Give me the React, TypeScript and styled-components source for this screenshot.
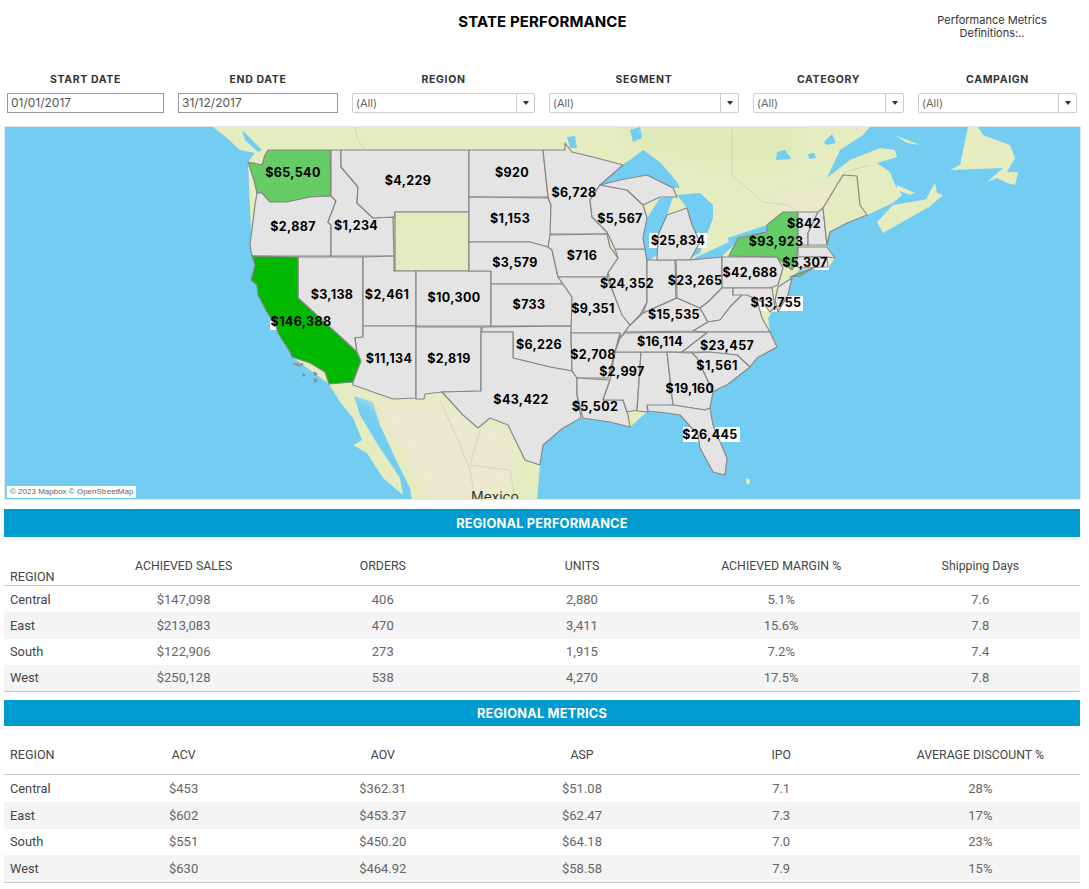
import styled, { createGlobalStyle } from "styled-components";

const GlobalStyle = createGlobalStyle`
  html, body {
    margin: 0;
    padding: 0;
    background: #fff;
    font-family: "Inter", "Liberation Sans", sans-serif;
  }
`;

const Page = styled.div`
  width: 1089px;
  height: 889px;
  overflow: hidden;
`;

const Header = styled.header`
  display: grid;
  grid-template-columns: 190px 1fr 194px;
  height: 72px;
`;

const Title = styled.h1`
  grid-column: 2;
  margin: 13px 0 0;
  font-size: 15px;
  line-height: 17px;
  font-weight: 700;
  letter-spacing: 0.1px;
  text-align: center;
  color: #000;
`;

const Note = styled.div`
  margin-top: 14px;
  font-size: 11px;
  line-height: 13px;
  text-align: center;
  color: #333;
`;

const Filters = styled.div`
  display: flex;
  gap: 14px;
  padding: 0 12px 0 7px;
  height: 54px;
`;

const Filter = styled.div<{ $width: number }>`
  width: ${(p) => p.$width}px;
  display: flex;
  flex-direction: column;
`;

const FilterLabel = styled.div`
  height: 21px;
  font-size: 10.5px;
  line-height: 15px;
  font-weight: 700;
  letter-spacing: 0.65px;
  text-align: center;
  color: #333;
`;

const DateBox = styled.div`
  box-sizing: border-box;
  height: 20px;
  padding-left: 3px;
  border: 1px solid #999;
  font-size: 12px;
  line-height: 18px;
  color: #555;
`;

const SelectBox = styled.div`
  box-sizing: border-box;
  height: 20px;
  display: flex;
  justify-content: space-between;
  border: 1px solid #ccc;
  border-radius: 2px;
  font-size: 11px;
  line-height: 18px;
  color: #666;
`;

const SelectText = styled.span`
  padding-left: 3px;
`;

const SelectArrow = styled.span`
  width: 17px;
  border-left: 1px solid #ccc;
  display: flex;
  align-items: center;
  justify-content: center;

  &::after {
    content: "";
    border-top: 4px solid #333;
    border-left: 3.5px solid transparent;
    border-right: 3.5px solid transparent;
  }
`;

const MapFrame = styled.div`
  position: relative;
  box-sizing: border-box;
  width: 1077px;
  height: 374px;
  margin-left: 4px;
  border: 1px solid #e6e6e6;
  background: #73cdf2;
  overflow: hidden;
`;

const MapSvg = styled.svg`
  display: block;
`;

const Land = styled.polygon`
  fill: #e5ecc0;
  stroke: none;
`;

const Tint = styled.polygon<{ $tone: string }>`
  fill: ${(p) => p.$tone};
  stroke: none;
  filter: blur(5px);
`;

const Water = styled.polygon`
  fill: #73cdf2;
  stroke: none;
`;

const Region = styled.polygon<{ $tone?: "high" | "mid" | "none" }>`
  fill: ${(p) =>
    p.$tone === "high"
      ? "#00b800"
      : p.$tone === "mid"
      ? "#66cc66"
      : p.$tone === "none"
      ? "#e5ebc0"
      : "#e4e4e4"};
  stroke: #868686;
  stroke-width: 1.2;
  stroke-linejoin: round;
`;

const BorderLine = styled.polyline`
  fill: none;
  stroke: #d3d6b8;
  stroke-width: 1;
`;

const Halo = styled.rect`
  fill: #fff;
`;

const Value = styled.text`
  font-family: "Inter", "Liberation Sans", sans-serif;
  font-size: 12.5px;
  font-weight: 700;
  letter-spacing: 0.35px;
  fill: #000;
  text-anchor: middle;
  dominant-baseline: central;
`;

const PlaceName = styled.text`
  font-family: "Inter", "Liberation Sans", sans-serif;
  font-size: 14px;
  fill: #333;
  text-anchor: middle;
`;

const Attribution = styled.div`
  position: absolute;
  left: 2px;
  bottom: 1px;
  height: 12px;
  padding: 0 3px;
  background: #fff;
  font-family: "Liberation Sans", sans-serif;
  font-size: 8px;
  line-height: 12px;
  color: #666;
`;

const Bar = styled.div<{ $top: number; $height: number }>`
  width: 1076px;
  height: ${(p) => p.$height}px;
  margin: ${(p) => p.$top}px 0 0 4px;
  background: #009bd0;
  font-size: 12.8px;
  font-weight: 700;
  line-height: ${(p) => p.$height + 1}px;
  letter-spacing: 0.2px;
  text-align: center;
  color: #fff;
`;

const Table = styled.div`
  width: 1076px;
  margin-left: 4px;
  border-bottom: 1px solid #c8c8c8;
  font-family: "Roboto", "Liberation Sans", sans-serif;
`;

const HeadRow = styled.div`
  display: grid;
  grid-template-columns: 80px repeat(5, 199.2px);
  height: 48px;
  border-bottom: 1px solid #c8c8c8;
`;

const HeadCell = styled.div<{ $first?: boolean; $low?: boolean }>`
  padding-top: ${(p) => (p.$low ? 32 : p.$first ? 21 : 22)}px;
  padding-left: ${(p) => (p.$first ? 6 : 0)}px;
  font-size: ${(p) => (p.$first ? 12.6 : 12.3)}px;
  line-height: 15px;
  text-align: ${(p) => (p.$first ? "left" : "center")};
  color: #444;
`;

const BodyRow = styled.div<{ $alt: boolean; $height: number }>`
  display: grid;
  grid-template-columns: 80px repeat(5, 199.2px);
  height: ${(p) => p.$height}px;
  align-items: center;
  background: ${(p) => (p.$alt ? "#f4f4f4" : "#fff")};
`;

const RegionCell = styled.div`
  padding-left: 6px;
  font-size: 12.8px;
  color: #444;
`;

const ValueCell = styled.div`
  font-size: 13px;
  text-align: center;
  color: #666;
`;

const filters = [
  { label: "START DATE", width: 157, value: "01/01/2017", date: true },
  { label: "END DATE", width: 160, value: "31/12/2017", date: true },
  { label: "REGION", width: 183, value: "(All)" },
  { label: "SEGMENT", width: 190, value: "(All)" },
  { label: "CATEGORY", width: 151, value: "(All)" },
  { label: "CAMPAIGN", width: 159, value: "(All)" },
];

type Tone = "high" | "mid" | "none";

const states: { points: string; tone?: Tone }[] = [
  { points: "268,150 330,150 331,196 310,197 287,202 270,202 262,193 257,193 254,180 248,162 262,165 265,155", tone: "mid" },
  { points: "257,193 262,193 270,202 287,202 310,197 331,196 336,201 328,222 331,225 331,256 252,256 250,245 255,205" },
  { points: "331,150 341,150 341,167 358,187 357,203 373,218 393,217 394,256 331,256 331,225 328,222 336,201 331,196" },
  { points: "341,150 469,150 469,212 395,212 394,218 393,217 373,218 357,203 358,187 341,167" },
  { points: "395,212 469,212 469,271 395,271", tone: "none" },
  { points: "298,257 363,257 363,337 355,338 357,352 298,298" },
  { points: "252,256 298,257 298,298 357,352 361,361 353,382 329,384 325,372 310,363 292,357 290,352 278,333 276,326 267,312 258,295 257,285 251,280 255,265", tone: "high" },
  { points: "363,257 394,256 394,271 416,271 416,326 363,326" },
  { points: "363,326 416,326 416,398 393,399 353,385 353,382 361,361 357,352 355,338 363,337" },
  { points: "416,271 491,271 491,326 416,326" },
  { points: "416,327 481,327 481,391 442,392 425,394 424,399 416,399" },
  { points: "469,150 543,150 548,197 469,197" },
  { points: "469,197 548,198 551,205 551,235 548,247 530,242 469,242" },
  { points: "469,242 530,242 548,247 552,250 558,277 563,284 491,284 491,271 469,271" },
  { points: "491,284 563,284 572,297 572,326 491,326" },
  { points: "482,327 572,326 571,333 572,371 550,367 513,358 513,332 482,332" },
  { points: "481,332 513,332 513,358 550,367 572,371 577,378 577,395 581,418 563,428 543,445 540,465 525,460 508,425 490,418 478,428 463,415 442,392 481,391" },
  { points: "543,150 565,150 565,143 572,152 593,157 623,165 600,185 590,200 592,217 607,232 607,234 550,234 551,205 548,197" },
  { points: "550,235 607,234 610,247 618,258 608,273 607,277 558,277 552,250 548,247" },
  { points: "558,277 607,277 613,292 623,315 630,325 620,338 620,333 571,333 572,297 563,284" },
  { points: "571,333 620,333 615,352 608,378 577,378 572,371" },
  { points: "577,378 610,380 603,400 623,400 628,415 630,427 610,422 583,418 577,395" },
  { points: "615,352 641,352 637,410 627,412 623,400 603,400 610,380" },
  { points: "641,352 667,352 673,405 647,407 648,412 637,411" },
  { points: "625,333 708,332 682,352 615,352 620,338" },
  { points: "630,325 643,313 677,298 700,308 708,322 693,331 625,332" },
  { points: "615,249 645,249 647,262 647,302 640,315 630,325 622,315 613,292 608,273 618,258" },
  { points: "590,200 600,185 627,190 643,205 647,218 643,238 645,249 615,249 607,232 592,217" },
  { points: "647,260 675,260 676,298 643,313 647,302" },
  { points: "657,260 658,235 667,215 687,208 692,225 700,242 690,260" },
  { points: "600,185 620,180 647,175 673,188 677,197 660,197 643,205 627,190" },
  { points: "676,260 690,260 722,257 722,288 708,302 700,308 677,298" },
  { points: "722,257 777,257 783,268 778,285 770,288 722,288" },
  { points: "722,288 733,288 733,295 745,292 730,307 720,320 708,322 700,308 708,302" },
  { points: "720,320 730,307 745,292 757,300 762,318 770,332 708,332 693,331 708,322" },
  { points: "733,288 772,288 775,307 770,312 762,302 747,295 733,295" },
  { points: "778,287 792,278 788,295 778,312 775,300" },
  { points: "783,212 798,212 798,245 795,265 792,270 782,262 777,257 729,256 738,238 767,232 767,225", tone: "mid" },
  { points: "790,277 813,268 800,276", tone: "mid" },
  { points: "798,212 818,212 808,233 808,245 798,245" },
  { points: "818,212 823,208 827,245 808,245 808,233" },
  { points: "798,247 827,247 835,258 827,257 798,257" },
  { points: "798,257 827,257 828,267 800,268 795,265" },
  { points: "708,332 770,332 777,347 757,358 750,367 737,355 707,352 682,352" },
  { points: "692,353 710,352 737,355 750,367 727,385 720,388 713,392 697,358" },
  { points: "667,352 692,353 697,358 713,392 710,408 705,410 673,405" },
  { points: "647,405 673,405 705,410 710,408 713,425 727,458 725,475 713,472 700,448 698,435 680,415 667,413 648,411" },
  { points: "823,208 843,175 857,176 860,205 867,215 847,223 830,232 827,245", tone: "none" },
  { points: "294,364 303,364 300,366" },
  { points: "314,372 317,374 315,375" },
  { points: "303,374 305,375 303,376" },
  { points: "314,379 317,380 315,382" },
];

const labels: [string, number, number][] = [
  ["$65,540", 293, 172], ["$4,229", 408, 180], ["$920", 512, 172], ["$6,728", 574, 192],
  ["$5,567", 620, 218], ["$1,153", 510, 218], ["$25,834", 678, 240], ["$2,887", 293, 226],
  ["$1,234", 356, 225], ["$3,579", 515, 262], ["$716", 582, 255], ["$24,352", 627, 283],
  ["$23,265", 695, 280], ["$93,923", 776, 241], ["$842", 804, 223], ["$5,307", 805, 262],
  ["$42,688", 750, 272], ["$13,755", 776, 302], ["$3,138", 332, 294], ["$2,461", 387, 294],
  ["$10,300", 454, 297], ["$733", 529, 304], ["$9,351", 593, 308], ["$15,535", 674, 314],
  ["$146,388", 301, 321], ["$6,226", 539, 344], ["$16,114", 660, 341], ["$23,457", 727, 345],
  ["$2,708", 593, 354], ["$11,134", 389, 358], ["$2,819", 449, 358], ["$1,561", 717, 365],
  ["$2,997", 622, 371], ["$19,160", 690, 388], ["$43,422", 521, 399], ["$5,502", 595, 406],
  ["$26,445", 710, 434],
];

const performance = {
  head: ["REGION", "ACHIEVED SALES", "ORDERS", "UNITS", "ACHIEVED MARGIN %", "Shipping Days"],
  rows: [
    ["Central", "$147,098", "406", "2,880", "5.1%", "7.6"],
    ["East", "$213,083", "470", "3,411", "15.6%", "7.8"],
    ["South", "$122,906", "273", "1,915", "7.2%", "7.4"],
    ["West", "$250,128", "538", "4,270", "17.5%", "7.8"],
  ],
};

const metrics = {
  head: ["REGION", "ACV", "AOV", "ASP", "IPO", "AVERAGE DISCOUNT %"],
  rows: [
    ["Central", "$453", "$362.31", "$51.08", "7.1", "28%"],
    ["East", "$602", "$453.37", "$62.47", "7.3", "17%"],
    ["South", "$551", "$450.20", "$64.18", "7.0", "23%"],
    ["West", "$630", "$464.92", "$58.58", "7.9", "15%"],
  ],
};

function DataTable({
  data,
  lowRegion,
  rowHeight,
}: {
  data: { head: string[]; rows: string[][] };
  lowRegion?: boolean;
  rowHeight: number;
}) {
  return (
    <Table>
      <HeadRow>
        {data.head.map((h, i) => (
          <HeadCell key={h} $first={i === 0} $low={i === 0 && lowRegion}>
            {h}
          </HeadCell>
        ))}
      </HeadRow>
      {data.rows.map((row, r) => (
        <BodyRow key={row[0]} $alt={r % 2 === 1} $height={rowHeight}>
          {row.map((v, i) =>
            i === 0 ? <RegionCell key={i}>{v}</RegionCell> : <ValueCell key={i}>{v}</ValueCell>
          )}
        </BodyRow>
      ))}
    </Table>
  );
}

function UsaMap() {
  return (
    <MapSvg width={1075} height={372} viewBox="5 127 1075 372">
      <Land points="213,127 870,127 863,135 840,150 827,178 850,160 880,148 895,150 897,157 877,163 890,172 895,185 902,195 893,203 867,215 847,223 830,232 827,245 835,258 828,268 800,270 790,278 788,295 778,312 772,312 768,318 770,332 777,347 757,358 750,367 727,385 713,392 710,408 713,425 727,458 725,475 713,472 700,448 698,435 680,415 667,413 648,411 630,427 610,422 583,418 563,428 543,445 540,465 537,500 412,500 410,488 397,462 380,425 373,402 354,396 360,415 378,445 400,478 403,495 383,478 367,453 353,445 362,440 353,418 340,402 329,384 292,357 252,256 248,162 255,153 240,150 227,138" />
      {/* soft terrain tints */}
      <Tint $tone="#ebe9cf" points="335,388 353,390 393,404 424,404 442,396 478,432 490,423 508,430 520,462 500,500 430,500 400,445 373,402" />
      <Tint $tone="#dfe9b8" points="620,130 800,130 790,165 700,162 650,150" />
      <Tint $tone="#ece9cf" points="770,200 830,185 828,205 790,212" />
      {/* maritimes */}
      <Land points="877,222 893,205 923,200 937,195 942,195 927,208 883,233" />
      <Land points="897,185 915,193 910,195 897,190" />
      <Land points="927,197 935,183 937,193 943,195 928,208" />
      <Land points="950,170 960,165 968,127 978,127 983,135 1010,145 1015,158 1007,172 1018,172 1015,185 1007,183 997,178 987,182 1003,168" />
      <Land points="895,135 920,145 907,143" />
      <Land points="746,478 750,480 749,485 746,483" />
      {/* vancouver strait */}
      <Water points="242,130 250,138 262,150 258,152 245,140" />
      {/* canadian lakes */}
      <Water points="567,137 575,136 577,148 570,148" />
      <Water points="630,130 640,127 642,138 633,142" />
      <Water points="824,142 832,134 836,143 826,145" />
      <Water points="777,152 785,150 791,159 776,160" />
      <Water points="808,154 814,153 816,158 809,159" />
      {/* great lakes */}
      <Water points="593,183 630,160 643,150 660,162 677,182 680,188 673,188 647,175 620,180 600,185" />
      <Water points="643,238 647,218 660,198 673,197 667,215 658,235 657,255 647,262 643,252" />
      <Water points="677,195 700,193 713,205 713,218 700,253 690,258 700,242 692,225 687,208" />
      <Water points="690,260 727,243 737,242 720,258 700,263" />
      <Water points="728,238 767,225 767,232 740,237 729,249" />
      <BorderLine points="732,127 732,175 763,202 788,205 798,212" />
      <BorderLine points="823,208 845,172 870,165" />
      <BorderLine points="355,127 358,140 365,150" />
      <BorderLine points="440,400 458,440 470,470 475,500" />
      <BorderLine points="480,430 470,465 510,470 515,500" />
      {/* label backgrounds sit under the states */}
      <Halo x={649} y={233} width={58} height={15} />
      <Halo x={752} y={296} width={51} height={15} />
      <Halo x={683} y={427} width={57} height={15} />
      <Halo x={270} y={321} width={9} height={9} />
      <Halo x={815} y={258} width={14} height={12} />
      {states.map((s, i) => (
        <Region key={i} points={s.points} $tone={s.tone} />
      ))}
      {labels.map(([text, x, y]) => (
        <Value key={text} x={x} y={y}>
          {text}
        </Value>
      ))}
      <PlaceName x={495} y={502}>
        Mexico
      </PlaceName>
    </MapSvg>
  );
}

export default function App() {
  return (
    <Page>
      <GlobalStyle />
      <Header>
        <Title>STATE PERFORMANCE</Title>
        <Note>
          Performance Metrics
          <br />
          Definitions:..
        </Note>
      </Header>
      <Filters>
        {filters.map((f) => (
          <Filter key={f.label} $width={f.width}>
            <FilterLabel>{f.label}</FilterLabel>
            {f.date ? (
              <DateBox>{f.value}</DateBox>
            ) : (
              <SelectBox>
                <SelectText>{f.value}</SelectText>
                <SelectArrow />
              </SelectBox>
            )}
          </Filter>
        ))}
      </Filters>
      <MapFrame>
        <UsaMap />
        <Attribution>© 2023 Mapbox © OpenStreetMap</Attribution>
      </MapFrame>
      <Bar $top={9} $height={28}>REGIONAL PERFORMANCE</Bar>
      <DataTable data={performance} lowRegion rowHeight={26.25} />
      <Bar $top={8} $height={26}>REGIONAL METRICS</Bar>
      <DataTable data={metrics} rowHeight={26.75} />
    </Page>
  );
}
